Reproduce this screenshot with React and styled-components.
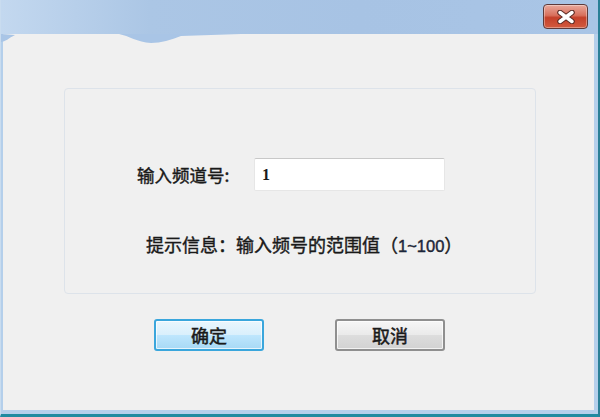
import React, { useState } from "react";
import styled, { createGlobalStyle } from "styled-components";

const GlobalStyle = createGlobalStyle`
  html, body {
    margin: 0;
    padding: 0;
    background: #f0f0f0;
  }
  body {
    font-family: "Noto Sans CJK SC", "Liberation Sans", sans-serif;
  }
`;

const App = () => {
  const [channel, setChannel] = useState("1");

  return (
    <>
      <GlobalStyle />
      <Window>
        <TitleBar>
          <Smear viewBox="0 0 240 12" preserveAspectRatio="none">
            <path
              d="M0 0 L0 8 C4 8 8 4 14 1 L0 0 Z M118 0 C128 2 136 8 150 9 C160 9 170 6 180 2 C200 1 220 1 240 0 Z"
              fill="#a9c5e6"
            />
          </Smear>
          <CloseButton aria-label="close">
            <svg width="22" height="14" viewBox="0 0 22 14">
              <path
                d="M5 2.5 L17 11.5 M17 2.5 L5 11.5"
                stroke="#5a2a24"
                strokeWidth="5.5"
                strokeLinecap="round"
              />
              <path
                d="M5 2.5 L17 11.5 M17 2.5 L5 11.5"
                stroke="#ffffff"
                strokeWidth="3.5"
                strokeLinecap="round"
              />
            </svg>
          </CloseButton>
        </TitleBar>
        <Client>
          <GroupBox>
            <FieldRow>
              <Label>输入频道号:</Label>
              <Input value={channel} onChange={(e) => setChannel(e.target.value)} />
            </FieldRow>
            <Hint>
              提示信息：输入频号的范围值（<Num>1~100</Num>）
            </Hint>
          </GroupBox>
          <ButtonRow>
            <Button primary>确定</Button>
            <Button>取消</Button>
          </ButtonRow>
        </Client>
      </Window>
    </>
  );
};

export default App;

const Window = styled.div`
  width: 600px;
  height: 417px;
  box-sizing: border-box;
  display: flex;
  flex-direction: column;
  background: #b4cfeb;
  border-style: solid;
  border-width: 0 2px 3px 1px;
  border-color: #1f8aa0 #2a7f96 #1f8aa0 #c9dcef;
  overflow: hidden;
`;

const TitleBar = styled.div`
  position: relative;
  height: 34px;
  flex-shrink: 0;
  display: flex;
  justify-content: flex-end;
  align-items: flex-start;
  padding: 4px 10px 0 0;
  box-sizing: border-box;
  background: linear-gradient(
    to right,
    #c3d8ef 0%,
    #abc6e5 25%,
    #a7c3e4 60%,
    #a9c5e6 100%
  );
`;

const Smear = styled.svg`
  position: absolute;
  left: 0;
  top: 34px;
  width: 240px;
  height: 12px;
  display: block;
  z-index: 1;
`;

const CloseButton = styled.button`
  width: 45px;
  height: 25px;
  border: 1px solid #5d3a3a;
  border-radius: 4px;
  padding: 0;
  display: flex;
  align-items: center;
  justify-content: center;
  background: linear-gradient(
    to bottom,
    #e9a99c 0%,
    #d8705c 45%,
    #c4402a 55%,
    #d25a3f 100%
  );
  box-shadow: inset 0 0 0 1px rgba(255, 255, 255, 0.35);
`;

const Client = styled.div`
  flex: 1;
  margin: 0 4px 4px 2px;
  background: #f0f0f0;
  display: flex;
  flex-direction: column;
`;

const GroupBox = styled.div`
  margin: 54px 0 0 61px;
  width: 472px;
  height: 206px;
  box-sizing: border-box;
  border: 1px solid #dde3ea;
  border-radius: 4px;
  display: flex;
  flex-direction: column;
  align-items: flex-start;
`;

const FieldRow = styled.div`
  display: flex;
  align-items: center;
  margin: 69px 0 0 72px;
`;

const Label = styled.span`
  font-size: 17.5px;
  color: #1a1a1a;
  -webkit-text-stroke: 0.4px #1a1a1a;
  width: 117px;
`;

const Input = styled.input`
  width: 191px;
  height: 33px;
  box-sizing: border-box;
  border: 1px solid #e6e6e6;
  border-top-color: #c8c8c8;
  border-radius: 2px;
  background: #fff;
  padding: 0 7px;
  font-family: "Liberation Serif", serif;
  font-size: 16px;
  font-weight: bold;
  color: #1a1a1a;
  outline: none;
`;

const Hint = styled.div`
  margin: 40px 0 0 81px;
  font-size: 18px;
  color: #1a1a1a;
  -webkit-text-stroke: 0.4px #1a1a1a;
  white-space: nowrap;
`;

const Num = styled.span`
  font-family: "Liberation Sans", sans-serif;
  font-size: 16.5px;
  color: #1a2a4a;
`;

const ButtonRow = styled.div`
  display: flex;
  align-items: center;
  gap: 71px;
  margin: 25px 0 0 151px;
`;

const Button = styled.button`
  width: 110px;
  height: 32px;
  box-sizing: border-box;
  border-radius: 3px;
  font-family: "Noto Sans CJK SC", sans-serif;
  font-size: 18px;
  color: #1a1a1a;
  -webkit-text-stroke: 0.5px #1a1a1a;
  padding: 0;
  border: ${(props) => (props.primary ? "2px solid #3aa6dc" : "2px solid #8f8f8f")};
  background: ${(props) =>
    props.primary
      ? "linear-gradient(to bottom, #eaf6fd 0%, #d9effc 50%, #bee6fd 51%, #a7d9f5 100%)"
      : "linear-gradient(to bottom, #f6f6f6 0%, #eaeaea 50%, #dddddd 51%, #d2d2d2 100%)"};
  box-shadow: inset 0 0 0 1px rgba(255, 255, 255, 0.7);
`;
